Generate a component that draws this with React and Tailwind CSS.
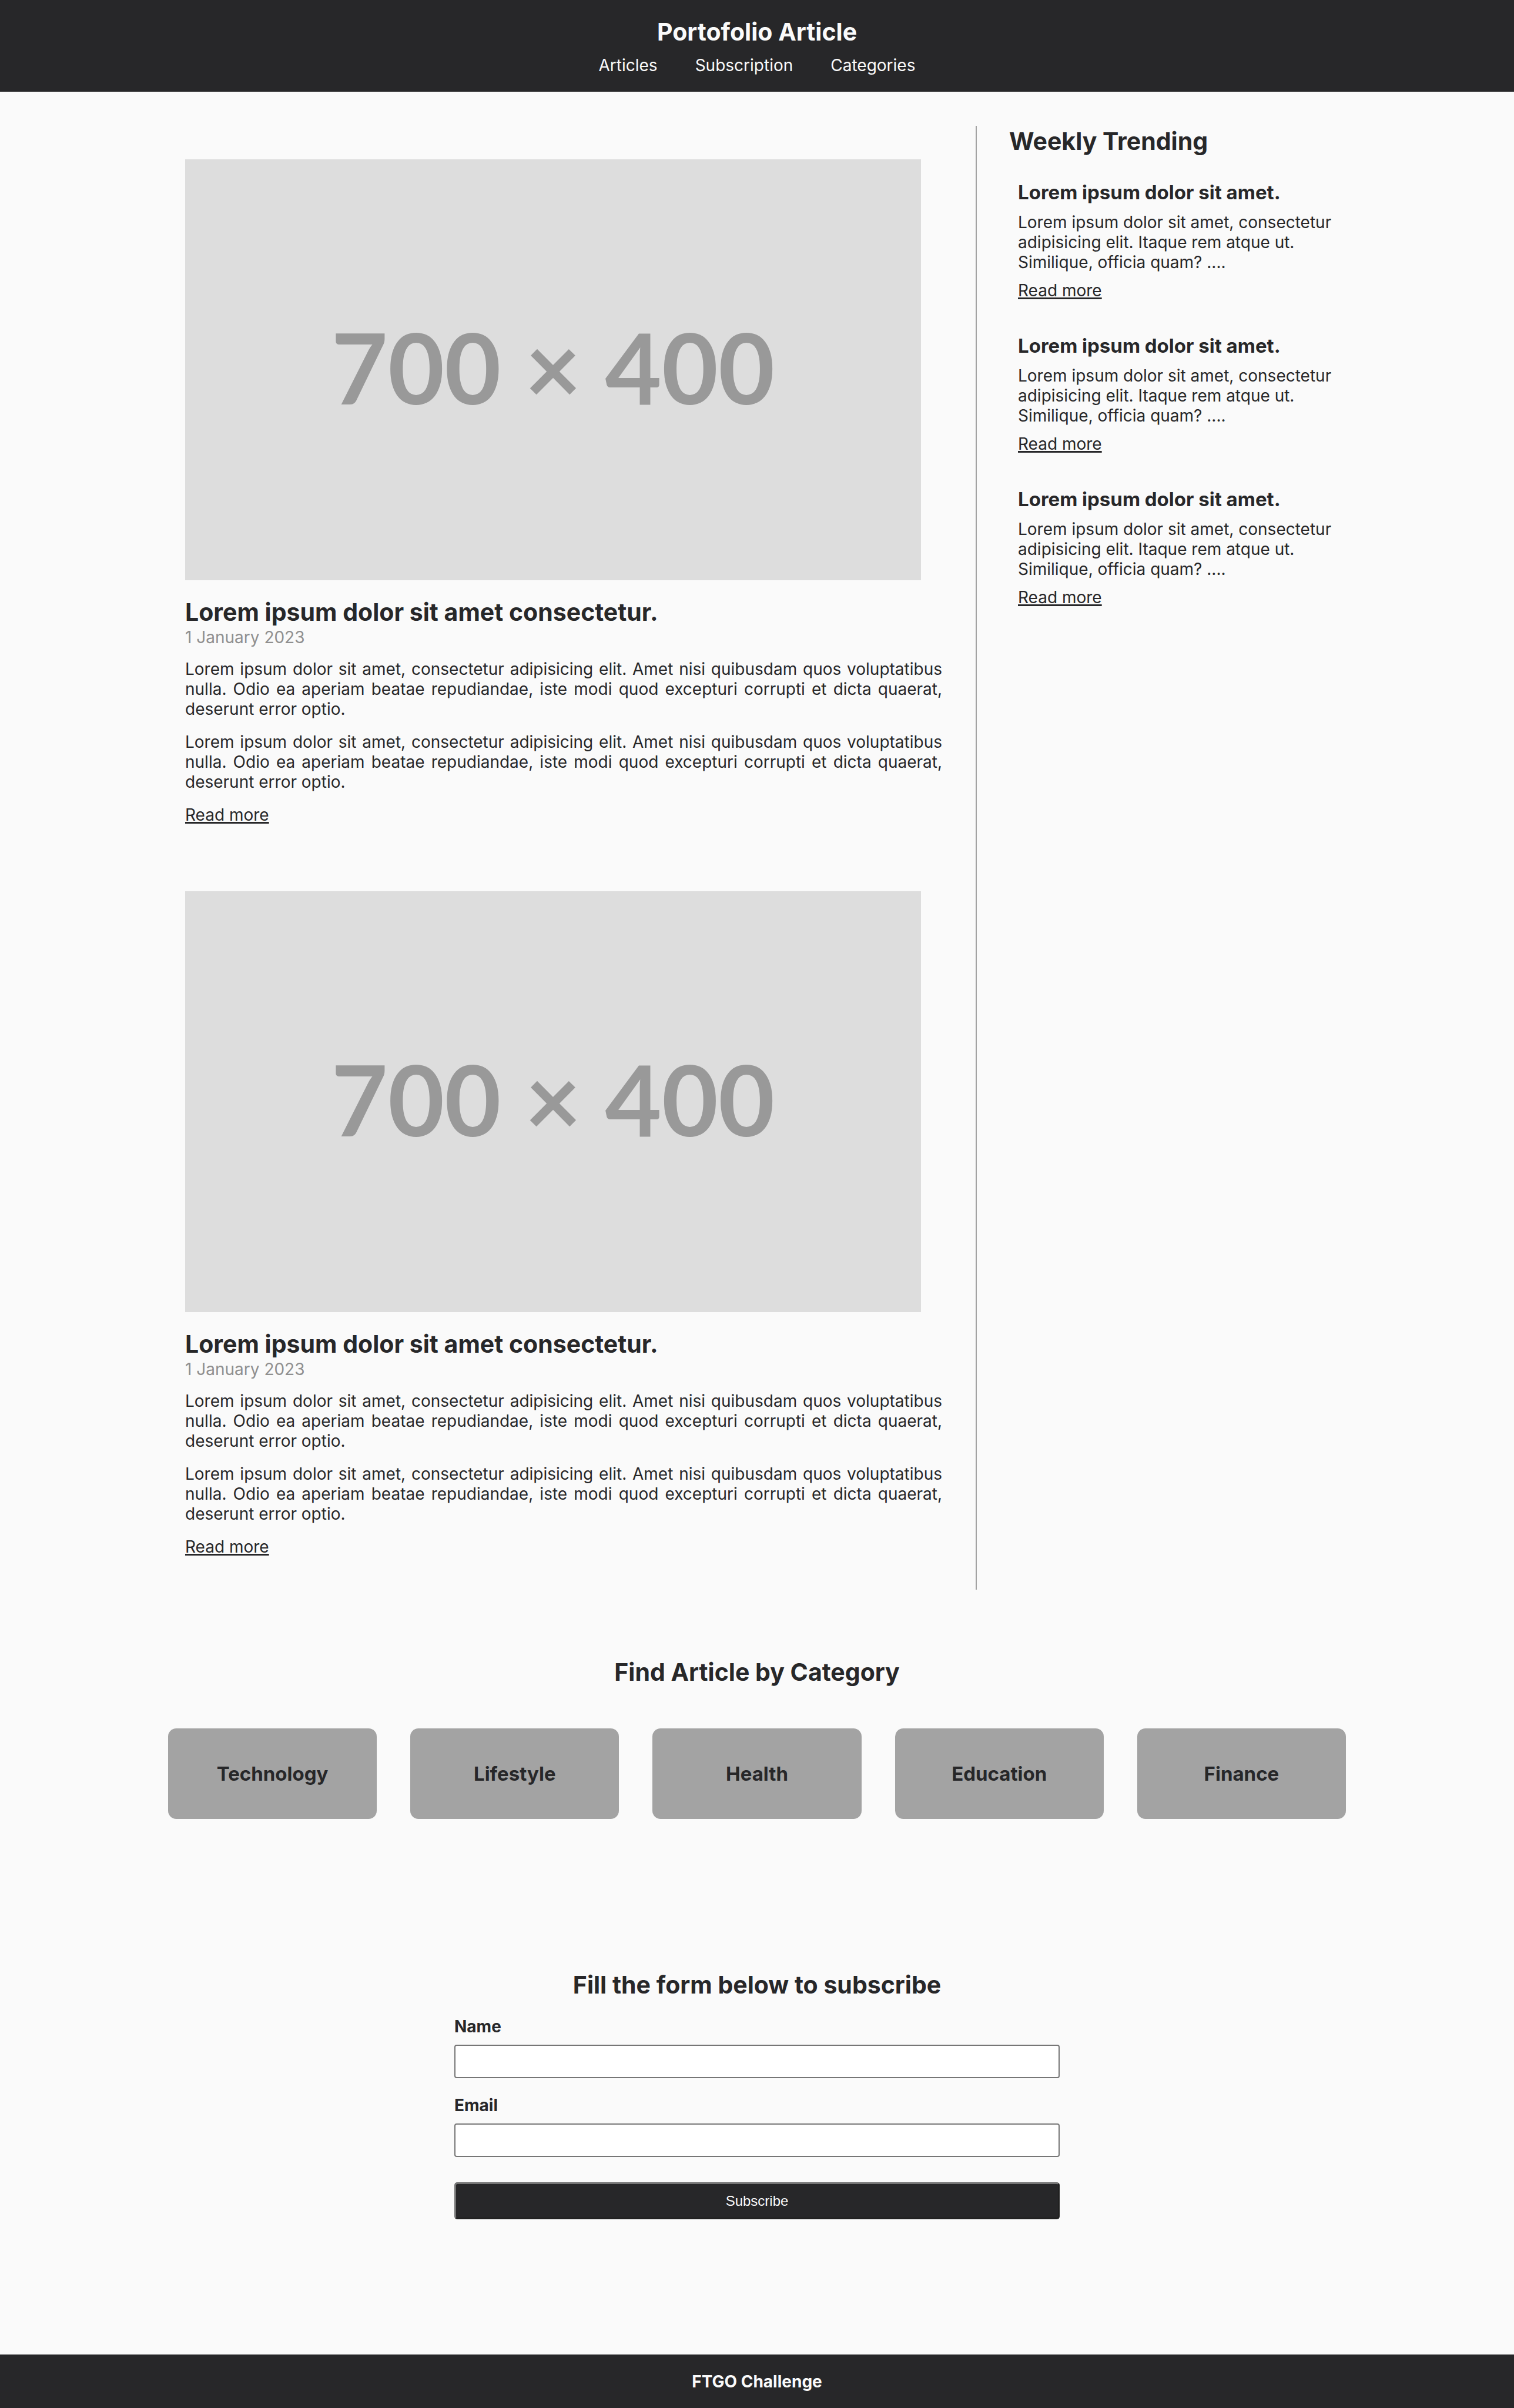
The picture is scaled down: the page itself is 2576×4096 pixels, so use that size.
const articles = [1, 2];
const trending = [1, 2, 3];
const categories = ["Technology", "Lifestyle", "Health", "Education", "Finance"];
const navItems = ["Articles", "Subscription", "Categories"];

const body =
  "Lorem ipsum dolor sit amet, consectetur adipisicing elit. Amet nisi quibusdam quos voluptatibus nulla. Odio ea aperiam beatae repudiandae, iste modi quod excepturi corrupti et dicta quaerat, deserunt error optio.";

function SectionTitle({ children, className = "" }) {
  return (
    <h2 className={`text-[41px] leading-[52px] font-bold ${className}`}>{children}</h2>
  );
}

function ReadMore() {
  return (
    <a
      href="#articles"
      className="block w-fit underline decoration-[3px] underline-offset-2 [text-decoration-skip-ink:none]"
    >
      Read more
    </a>
  );
}

function Article() {
  return (
    <article className="px-[29px] pt-[57px] pb-14">
      <div
        role="img"
        aria-label="Placeholder, 700 by 400"
        className="flex aspect-[1252/716] w-full max-w-[1252px] items-center justify-center bg-[#dddddd] pb-2.5 font-['Lato',sans-serif] text-[166px] leading-none font-bold text-[#999999]"
      >
        700 × 400
      </div>
      <SectionTitle className="mt-7">Lorem ipsum dolor sit amet consectetur.</SectionTitle>
      <p className="text-[#8f8f8f]">1 January 2023</p>
      <div className="mt-5 flex flex-col gap-[22px]">
        <p className="text-justify">{body}</p>
        <p className="text-justify">{body}</p>
        <ReadMore />
      </div>
    </article>
  );
}

function TrendingItem() {
  return (
    <article className="flex flex-col gap-3.5 px-[15px]">
      <h3 className="text-[33px] leading-10 font-bold">Lorem ipsum dolor sit amet.</h3>
      <p>
        Lorem ipsum dolor sit amet, consectetur adipisicing elit. Itaque rem atque ut. Similique,
        officia quam? ....
      </p>
      <ReadMore />
    </article>
  );
}

function Field({ id, label, type }) {
  return (
    <div className="flex flex-col gap-3.5">
      <label htmlFor={id} className="font-bold">
        {label}
      </label>
      <input
        id={id}
        type={type}
        className="h-[57px] w-full rounded-sm border-2 border-[#767676] bg-white px-3"
      />
    </div>
  );
}

export default function App() {
  return (
    <div className="min-h-screen bg-[#fafafa] font-['Inter',sans-serif] text-[28px] leading-[34px] text-[#272729]">
      <header className="flex flex-col items-center gap-3.5 bg-[#272729] py-7 text-[#fafafa]">
        <h1 className="text-[41px] leading-[52px] font-bold">Portofolio Article</h1>
        <nav className="flex gap-16">
          {navItems.map((item) => (
            <a key={item} href={`#${item.toLowerCase()}`}>
              {item}
            </a>
          ))}
        </nav>
      </header>

      <main className="mx-auto max-w-[2004px]">
        <div className="flex pt-[58px]">
          <section id="articles" className="w-[1346px] shrink">
            {articles.map((n) => (
              <Article key={n} />
            ))}
          </section>
          <aside className="ml-7 flex-1 border-l-2 border-[#a3a3a3] pl-[55px]">
            <SectionTitle>Weekly Trending</SectionTitle>
            <div className="mt-[41px] flex flex-col gap-[57px]">
              {trending.map((n) => (
                <TrendingItem key={n} />
              ))}
            </div>
          </aside>
        </div>

        <section id="categories" className="pt-[114px]">
          <SectionTitle className="text-center">Find Article by Category</SectionTitle>
          <div className="mt-[70px] grid grid-cols-5 gap-[57px]">
            {categories.map((name) => (
              <a
                key={name}
                href={`#${name.toLowerCase()}`}
                className="rounded-[14px] bg-[#a3a3a3] py-[57px] text-center text-[33px] leading-10 font-bold"
              >
                {name}
              </a>
            ))}
          </div>
        </section>

        <section id="subscription" className="pt-[256px] pb-[230px]">
          <SectionTitle className="text-center">Fill the form below to subscribe</SectionTitle>
          <form className="mx-auto mt-7 flex max-w-[1030px] flex-col gap-[29px]">
            <Field id="name" label="Name" type="text" />
            <Field id="email" label="Email" type="email" />
            <button
              type="button"
              className="mt-3.5 h-[63px] rounded-[5px] border-[3px] border-t-[#767676] border-r-[#212121] border-b-[#212121] border-l-[#767676] bg-[#272729] font-['Liberation_Sans',sans-serif] text-2xl text-[#fafafa]"
            >
              Subscribe
            </button>
          </form>
        </section>
      </main>

      <footer className="bg-[#272729] pt-[29px] pb-7 text-center font-bold text-[#fafafa]">
        FTGO Challenge
      </footer>
    </div>
  );
}
